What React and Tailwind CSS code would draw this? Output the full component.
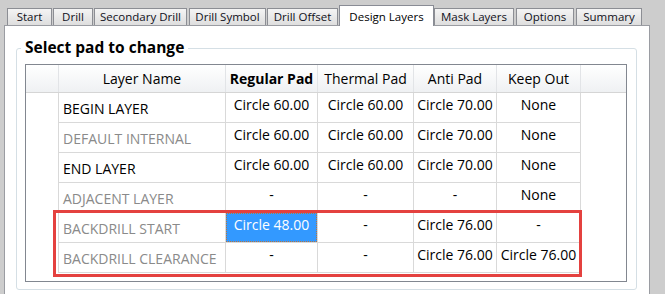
import React from 'react';

const tabs = [
  { label: 'Start', w: 'w-[45px]', ml: 'ml-[7px]' },
  { label: 'Drill', w: 'w-[40px]', ml: 'ml-[1px]' },
  { label: 'Secondary Drill', w: 'w-[93px]', ml: 'ml-[1px]' },
  { label: 'Drill Symbol', w: 'w-[77px]', ml: 'ml-[2px]' },
  { label: 'Drill Offset', w: 'w-[71px]', ml: 'ml-[1px]' },
  { label: 'Design Layers', w: 'w-[95px]', ml: 'ml-[1px]', active: true },
  { label: 'Mask Layers', w: 'w-[80px]', ml: 'ml-0' },
  { label: 'Options', w: 'w-[58px]', ml: 'ml-[2px]' },
  { label: 'Summary', w: 'w-[66px]', ml: 'ml-[2px]' },
];

const columns = [
  { label: 'Layer Name', w: 'w-[167px]' },
  { label: 'Regular Pad', w: 'w-[92px]', bold: true },
  { label: 'Thermal Pad', w: 'w-[96px]' },
  { label: 'Anti Pad', w: 'w-[83px]' },
  { label: 'Keep Out', w: 'w-[84px]' },
];

const rows = [
  { name: 'BEGIN LAYER', dim: false, values: ['Circle 60.00', 'Circle 60.00', 'Circle 70.00', 'None'] },
  { name: 'DEFAULT INTERNAL', dim: true, values: ['Circle 60.00', 'Circle 60.00', 'Circle 70.00', 'None'] },
  { name: 'END LAYER', dim: false, values: ['Circle 60.00', 'Circle 60.00', 'Circle 70.00', 'None'] },
  { name: 'ADJACENT LAYER', dim: true, values: ['-', '-', '-', 'None'] },
  { name: 'BACKDRILL START', dim: true, values: ['Circle 48.00', '-', 'Circle 76.00', '-'], selected: 0 },
  { name: 'BACKDRILL CLEARANCE', dim: true, values: ['-', '-', 'Circle 76.00', 'Circle 76.00'] },
];

const Tab = ({ tab }) => {
  if (tab.active) {
    return (
      <div
        className={`${tab.w} ${tab.ml} h-[21px] -mb-px relative z-10 bg-white border border-b-0 border-[#898c95] flex items-start justify-center pt-[2px] text-[11.5px] text-black`}
      >
        {tab.label}
      </div>
    );
  }
  return (
    <div
      className={`${tab.w} ${tab.ml} h-[17px] bg-gradient-to-b from-[#f4f4f4] to-[#dedede] border border-b-0 border-[#8c8e94] flex items-center justify-center text-[11.5px] text-[#101020]`}
    >
      {tab.label}
    </div>
  );
};

export default function App() {
  return (
    <div
      className="w-[665px] h-[294px] bg-[#cdcdcd] overflow-hidden"
      style={{ fontFamily: '"Open Sans", "Noto Sans", sans-serif' }}
    >
      {/* tab strip */}
      <div className="flex items-end h-[25px]">
        {tabs.map(tab => (
          <Tab key={tab.label} tab={tab} />
        ))}
      </div>

      {/* tab page */}
      <div className="ml-[4px] w-[646px] h-[269px] bg-white border border-b-0 border-[#9a9ca2] pt-[22px] pl-[11px]">
        <div className="relative w-[621px] h-[242px] border border-[#d5dfe5] rounded-[3px] pt-[15px] pl-[8px]">
          <span className="absolute left-[4px] top-[-13px] px-[4px] bg-white text-[15.5px] font-bold text-black leading-[22px]">
            Select pad to change
          </span>

          {/* grid */}
          <div className="relative w-[602px] h-[218px] border border-[#828790] bg-white text-[14px] leading-[20px]">
            <div className="flex h-[28px] bg-gradient-to-b from-white to-[#eff1f3] border-b border-[#d5d5d5]">
              <div className="w-[33px] border-r border-[#e2e4e7]" />
              {columns.map(col => (
                <div
                  key={col.label}
                  className={`${col.w} border-r border-[#e2e4e7] flex items-center justify-center text-black ${col.bold ? 'font-bold' : ''}`}
                >
                  {col.label}
                </div>
              ))}
              <div className="flex-1" />
            </div>

            {rows.map(row => (
              <div key={row.name} className="flex h-[30px]">
                <div className="w-[33px] border-r border-[#d9d9d9]" />
                <div
                  className={`w-[167px] border-r border-b border-[#d9d9d9] flex items-center pl-[4px] pt-[2px] ${row.dim ? 'text-[#8a8a8a]' : 'text-black'}`}
                >
                  {row.name}
                </div>
                {row.values.map((v, i) => (
                  <div
                    key={i}
                    className={`${columns[i + 1].w} border-r border-b border-[#d9d9d9] flex justify-center`}
                  >
                    {row.selected === i ? (
                      <div className="w-full h-full bg-[#3399ff] text-white border border-dotted border-[#b8743a] flex justify-center pt-[1px]">
                        {v}
                      </div>
                    ) : (
                      <div className="text-black pt-[2px]">{v}</div>
                    )}
                  </div>
                ))}
              </div>
            ))}

            {/* annotation box */}
            <div className="absolute left-[27px] top-[145px] w-[529px] h-[67px] border-[3px] border-[#e4413f] pointer-events-none" />
          </div>
        </div>
      </div>
    </div>
  );
}
